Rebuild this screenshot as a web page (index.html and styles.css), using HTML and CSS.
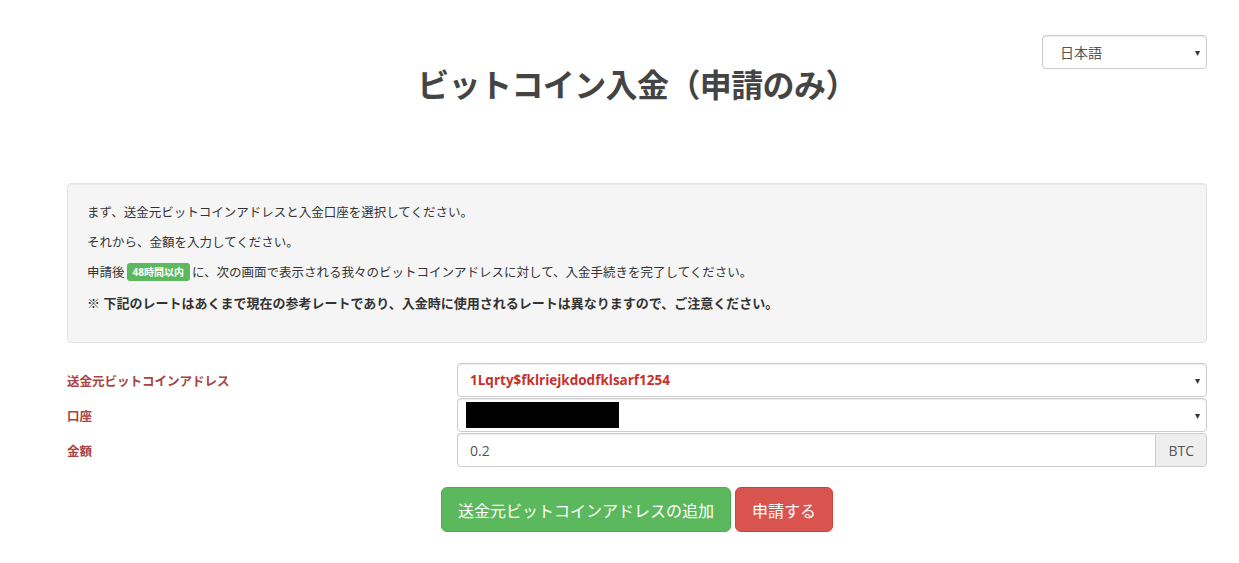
FILE: index.html
```
<!DOCTYPE html>
<html lang="ja">
	<head>
		<meta charset="utf-8">
		<meta name="viewport" content="width=device-width, initial-scale=1.0">
		<title>ビットコイン入金（申請のみ）</title>
		<link rel="stylesheet" href="styles.css">
	</head>

	<body>
		<div class="container">
			<header class="top">
				<div></div>
				<h1>ビットコイン入金（申請のみ）</h1>
				<div class="picker lang">
					<span>日本語</span>
					<span class="caret">▾</span>
				</div>
			</header>

			<div class="well">
				<p>まず、送金元ビットコインアドレスと入金口座を選択してください。</p>
				<p>それから、金額を入力してください。</p>
				<p>申請後<span class="badge">48時間以内</span>に、次の画面で表示される我々のビットコインアドレスに対して、入金手続きを完了してください。</p>
				<p class="note">※ 下記のレートはあくまで現在の参考レートであり、入金時に使用されるレートは異なりますので、ご注意ください。</p>
			</div>

			<form class="deposit">
				<label>送金元ビットコインアドレス</label>
				<div class="picker">
					<span class="addr">1Lqrty$fklriejkdodfklsarf1254</span>
					<span class="caret">▾</span>
				</div>

				<label>口座</label>
				<div class="picker">
					<span class="hidden-box"></span>
					<span class="caret">▾</span>
				</div>

				<label>金額</label>
				<div class="group">
					<div class="field">0.2</div>
					<div class="addon">BTC</div>
				</div>
			</form>

			<div class="actions">
				<button class="btn green">送金元ビットコインアドレスの追加</button>
				<button class="btn red">申請する</button>
			</div>
		</div>
	</body>
</html>
```

FILE: styles.css
```
body{
	margin: 0;
	font-family: "Open Sans", "Noto Sans CJK JP", sans-serif;
	font-size: 13px;
	color: #333;
	background-color: white;
}
.container{
	width: 1140px;
	margin-left: 67px;
}
.top{
	display: grid;
	grid-template-columns: 1fr auto 1fr;
	align-items: start;
	height: 183px;
}
h1{
	margin: 62px 0 0;
	font-size: 32px;
	line-height: 46px;
	font-weight: bold;
	color: #444;
	letter-spacing: -0.6px;
}
.picker{
	display: flex;
	align-items: center;
	justify-content: space-between;
	box-sizing: border-box;
	height: 34px;
	padding: 0 6px 0 12px;
	border: 1px solid #ccc;
	border-radius: 4px;
	background-color: white;
	box-shadow: inset 0 1px 1px rgba(0,0,0,.075);
	color: #555;
}
.lang{
	justify-self: end;
	width: 165px;
	margin-top: 35px;
	padding-left: 17px;
	font-size: 14px;
}
.caret{
	font-size: 10px;
	color: #333;
}
.well{
	box-sizing: border-box;
	height: 160px;
	padding: 14px 19px 25px;
	border: 1px solid #e3e3e3;
	border-radius: 4px;
	background-color: #f5f5f5;
	box-shadow: inset 0 1px 1px rgba(0,0,0,.05);
	font-size: 12.5px;
}
.well p{
	margin: 0;
	line-height: 30px;
}
.well .note{
	font-size: 13px;
	font-weight: bold;
}
.badge{
	display: inline-block;
	margin: 0 2px;
	padding: 0 6px;
	height: 18px;
	line-height: 18px;
	border-radius: 3px;
	background-color: #5cb85c;
	color: white;
	font-size: 10px;
	font-weight: bold;
	vertical-align: 1px;
}
.deposit{
	display: grid;
	grid-template-columns: 390px 1fr;
	row-gap: 1px;
	margin-top: 20px;
}
.deposit label{
	display: flex;
	align-items: center;
	color: #a94442;
	font-size: 12.5px;
	font-weight: bold;
}
.addr{
	color: #c9302c;
	font-size: 13.5px;
	font-weight: bold;
}
.hidden-box{
	width: 153px;
	height: 26px;
	margin-left: -4px;
	background-color: black;
}
.group{
	display: flex;
	height: 34px;
	font-size: 14px;
}
.field{
	flex: 1;
	display: flex;
	align-items: center;
	padding: 0 12px;
	border: 1px solid #ccc;
	border-right: none;
	border-radius: 4px 0 0 4px;
	box-shadow: inset 0 1px 1px rgba(0,0,0,.075);
	color: #555;
}
.addon{
	display: flex;
	align-items: center;
	padding: 0 12px;
	border: 1px solid #ccc;
	border-radius: 0 4px 4px 0;
	background-color: #eee;
	color: #555;
}
.actions{
	display: flex;
	justify-content: center;
	gap: 4px;
	margin-top: 20px;
}
.btn{
	height: 45px;
	padding: 0 16px;
	border: 1px solid transparent;
	border-radius: 6px;
	font-family: inherit;
	font-size: 16px;
	color: white;
	cursor: pointer;
}
.green{
	background-color: #5cb85c;
	border-color: #4cae4c;
}
.red{
	background-color: #d9534f;
	border-color: #d43f3a;
}
```
